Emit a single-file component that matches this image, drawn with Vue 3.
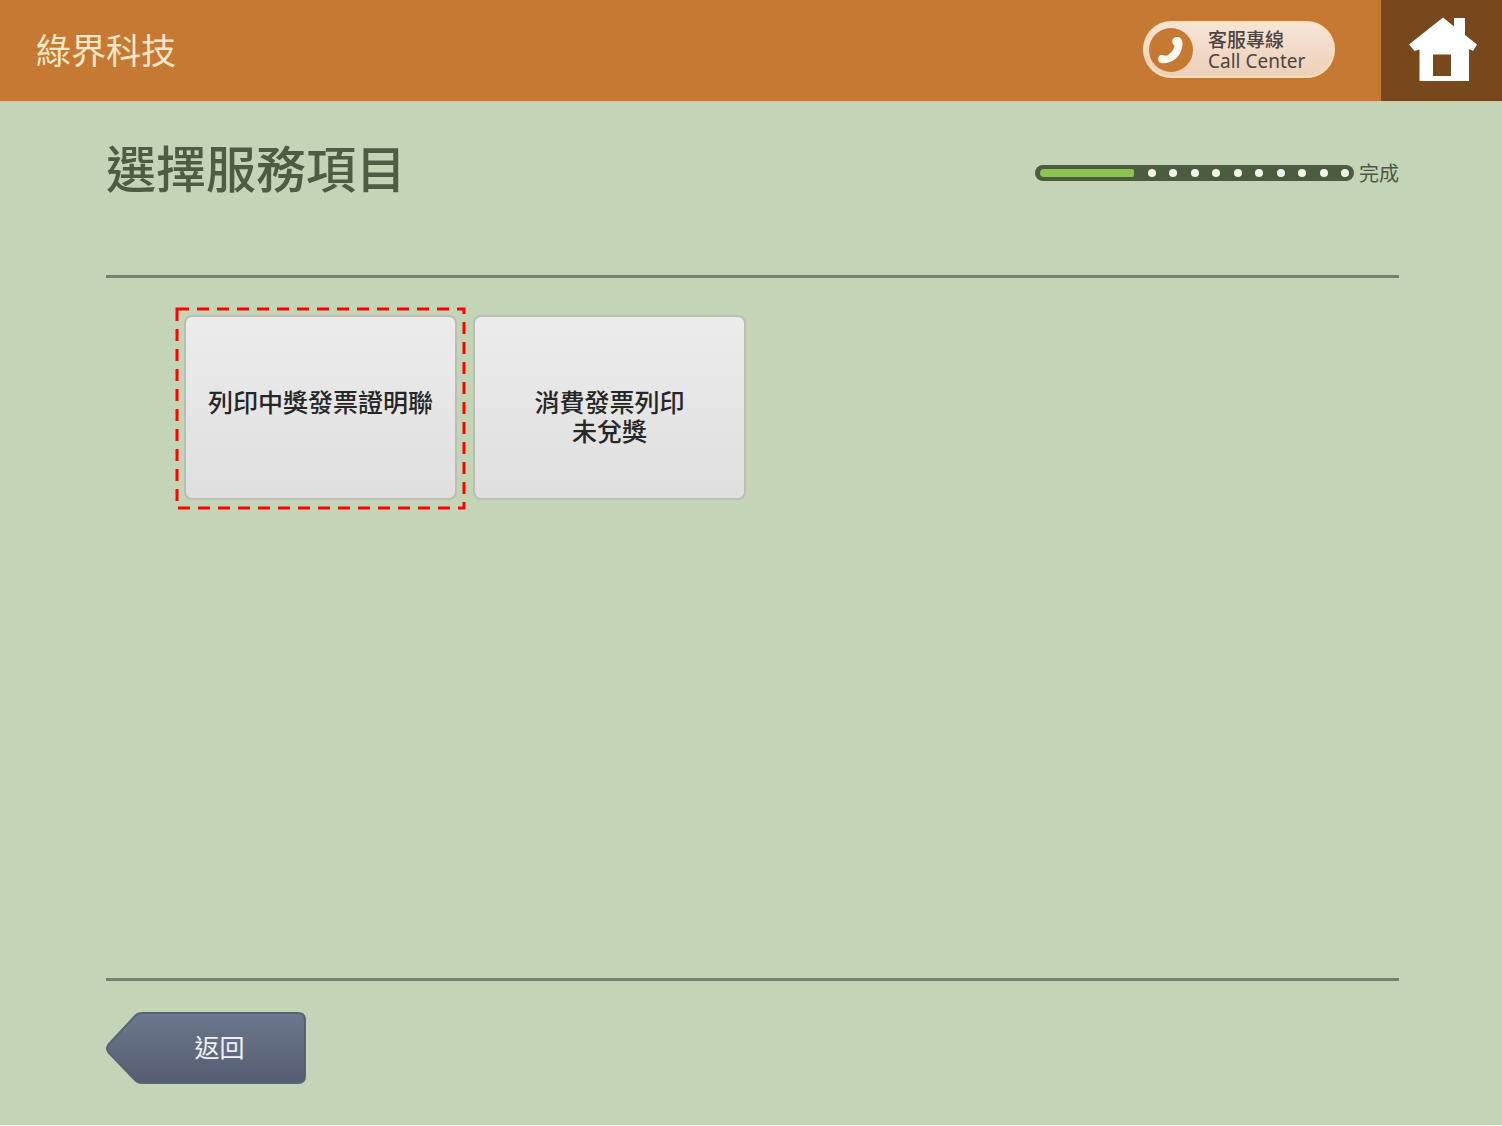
<template>
    <div class="kiosk">
        <header class="topbar">
            <span class="brand">綠界科技</span>
            <button type="button" class="call-center">
                <svg class="call-icon" viewBox="0 0 44 44" aria-hidden="true">
                    <circle cx="22" cy="22" r="22" fill="#c67932" />
                    <path d="M28 9C32 9 33.500 12 33.500 15.500C33.500 21 31 27 27 30.500C23.500 33.500 18 35.500 13 35.300C9.500 35 8.800 32 9.500 29.500C10.200 27 12 26.800 14.500 27.200L17.500 27.800C20.500 26.500 24.500 22.500 25.500 18.500L23.500 15C22.800 11.500 24.500 9 28 9Z" fill="#fff8ee" />
                </svg>
                <span class="call-text">
                    <span>客服專線</span>
                    <span class="call-latin">Call Center</span>
                </span>
            </button>
            <a href="#" class="home" aria-label="首頁">
                <svg class="home-icon" viewBox="0 0 70 66" aria-hidden="true">
                    <path d="M35 .500L46 9.500V1H57V18L69 27.500L65 34L61 32V64H11.500V32.500L6.500 34L1 27.500Z" fill="#fff" />
                    <path d="M25 37.500H43V59H25Z" fill="#76481c" />
                </svg>
            </a>
        </header>

        <main class="content">
            <div class="heading">
                <h1>選擇服務項目</h1>
                <div class="steps">
                    <div class="track">
                        <div class="fill"></div>
                        <i v-for="n in remaining" :key="n" class="dot"></i>
                    </div>
                    <span>完成</span>
                </div>
            </div>

            <div class="services">
                <div v-for="service in services" :key="service.id" class="service">
                    <button type="button" @click="selected = service.id">{{ service.label }}</button>
                    <svg v-if="selected === service.id" class="marker" aria-hidden="true">
                        <rect width="100%" height="100%" />
                    </svg>
                </div>
            </div>

            <footer class="actions">
                <button type="button" class="back">
                    <svg viewBox="0 0 201 72" aria-hidden="true">
                        <defs>
                            <linearGradient id="backFill" x1="0" y1="0" x2="0" y2="1">
                                <stop offset="0" stop-color="#6b788d" />
                                <stop offset="1" stop-color="#575d72" />
                            </linearGradient>
                        </defs>
                        <path d="M36 1H192Q199 1 199 8V64Q199 71 192 71H36Q32 71 29 68L3 41Q-1 36.500 3 32L29 4Q32 1 36 1Z" fill="url(#backFill)" stroke="#596272" stroke-width="2" />
                    </svg>
                    <span>返回</span>
                </button>
            </footer>
        </main>
    </div>
</template>

<script setup>
import { ref } from 'vue';

    const remaining = 10
    const services = [
        { id: 'winning', label: '列印中獎發票證明聯' },
        { id: 'receipt', label: '消費發票列印\n未兌獎' }
    ]
    const selected = ref('winning')
</script>

<style>
    body {
        margin: 0;
    }
</style>

<style scoped>
    .kiosk {
        box-sizing: border-box;
        display: flex;
        flex-direction: column;
        min-height: 100vh;
        background: #c4d4b7;
        border-bottom: 1px solid #eef3ea;
        font-family: "Noto Sans CJK TC", sans-serif;
    }
    button {
        font: inherit;
        cursor: pointer;
    }
    .topbar {
        display: flex;
        align-items: center;
        height: 101px;
        background: #c67932;
        border-bottom: 1px solid #d2c796;
    }
    .brand {
        margin-left: 36px;
        padding-bottom: 4px;
        font-size: 35px;
        line-height: 48px;
        color: #fde6c8;
        font-weight: 400;
    }
    .call-center {
        box-sizing: border-box;
        display: flex;
        align-items: center;
        gap: 15px;
        width: 192px;
        height: 57px;
        margin: 0 46px 2px auto;
        padding: 0 4px;
        border: 2px solid #fde0b8;
        border-radius: 29px;
        background: linear-gradient(#f8e5d8, #eccfb8) border-box;
        color: #4c4540;
        text-align: left;
    }
    .call-icon {
        width: 44px;
        height: 44px;
    }
    .call-text {
        display: flex;
        flex-direction: column;
        font-size: 19px;
        line-height: 22px;
        font-weight: 500;
    }
    .call-latin {
        font-family: "Noto Sans", sans-serif;
        font-weight: 400;
    }
    .home {
        box-sizing: border-box;
        display: flex;
        align-items: center;
        justify-content: center;
        width: 121px;
        height: 101px;
        padding: 0 0 2px 2px;
        background: #76481c;
    }
    .home-icon {
        width: 70px;
        height: 66px;
    }
    .content {
        flex: 1;
        display: flex;
        flex-direction: column;
        padding: 0 103px 0 106px;
    }
    .heading {
        display: flex;
        justify-content: space-between;
        height: 173px;
        border-bottom: 3px solid #76816f;
    }
    h1 {
        margin: 28px 0 0;
        font-size: 50px;
        line-height: 72px;
        font-weight: 500;
        color: #4d5c43;
    }
    .steps {
        display: flex;
        align-items: center;
        gap: 5px;
        height: 24px;
        margin-top: 59px;
        font-size: 20px;
        line-height: 24px;
        color: #4d5746;
    }
    .track {
        box-sizing: border-box;
        display: flex;
        align-items: center;
        justify-content: space-between;
        width: 319px;
        height: 16px;
        padding: 0 5px;
        border-radius: 8px;
        background: #4b5c40;
    }
    .fill {
        width: 94px;
        height: 8px;
        border-radius: 4px 2px 2px 4px;
        background: #8cc351;
    }
    .dot {
        width: 8px;
        height: 8px;
        border-radius: 50%;
        background: #f0f5e8;
    }
    .services {
        flex: 1;
        display: flex;
        align-items: flex-start;
        gap: 16px;
        padding: 37px 0 0 78px;
    }
    .service {
        position: relative;
    }
    .service button {
        box-sizing: border-box;
        display: flex;
        justify-content: center;
        align-items: flex-start;
        width: 273px;
        height: 185px;
        padding: 70px 0 0;
        border: 2px solid #b9bfb3;
        border-radius: 8px;
        background: linear-gradient(#ececec, #dfdfdf);
        font-size: 25px;
        line-height: 29px;
        font-weight: 500;
        color: #262626;
        white-space: pre-line;
    }
    .marker {
        position: absolute;
        top: -6px;
        left: -7px;
        width: 287px;
        height: 199px;
        overflow: visible;
        pointer-events: none;
    }
    .marker rect {
        fill: none;
        stroke: #fe0000;
        stroke-width: 3px;
        stroke-dasharray: 12 8;
    }
    .actions {
        padding: 31px 0 41px;
        border-top: 3px solid #76816f;
    }
    .back {
        position: relative;
        display: block;
        width: 201px;
        height: 72px;
        padding: 0 0 4px 26px;
        border: 0;
        background: none;
        color: #eef2f8;
        font-size: 25px;
        line-height: 36px;
    }
    .back svg {
        position: absolute;
        inset: 0;
    }
    .back span {
        position: relative;
    }
</style>
